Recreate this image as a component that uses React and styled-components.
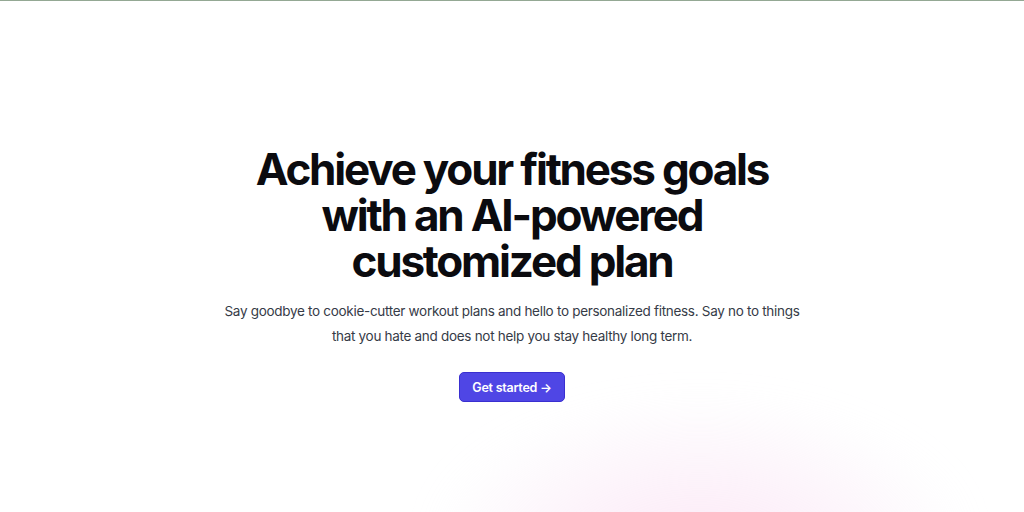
import React from "react";
import styled, { createGlobalStyle } from "styled-components";

const Global = createGlobalStyle`
  html, body { margin: 0; padding: 0; background: #fff; }
  body { font-family: Inter, "Noto Sans", sans-serif; -webkit-font-smoothing: antialiased; }
`;

const Page = styled.div`
  position: relative;
  width: 1024px;
  height: 512px;
  overflow: hidden;
  border-top: 1px solid #94a894;
  box-sizing: border-box;
  background: #fff;
`;

const Glow = styled.div`
  position: absolute;
  left: 440px;
  top: 405px;
  width: 520px;
  height: 260px;
  border-radius: 50%;
  background: radial-gradient(ellipse at 50% 70%, rgba(248, 196, 232, 0.45) 0%, rgba(246, 210, 238, 0.25) 45%, rgba(240, 232, 246, 0.08) 72%, rgba(255, 255, 255, 0) 100%);
  filter: blur(18px);
  pointer-events: none;
`;

const Hero = styled.section`
  position: relative;
  display: flex;
  flex-direction: column;
  align-items: center;
  padding-top: 145px;
  text-align: center;
`;

const Title = styled.h1`
  margin: 0;
  max-width: 560px;
  font-size: 44px;
  line-height: 46px;
  font-weight: 700;
  letter-spacing: -0.05em;
  color: #0b0b0f;
`;

const Lead = styled.p`
  margin: 15px 0 0;
  max-width: 580px;
  font-size: 13.5px;
  line-height: 25px;
  letter-spacing: -0.3px;
  color: #363b47;
`;

const Button = styled.a`
  margin-top: 23px;
  display: inline-flex;
  align-items: center;
  gap: 4px;
  height: 30px;
  padding: 0 12px;
  box-sizing: border-box;
  border-radius: 5px;
  background: #4f46e5;
  border: 1px solid #3a2fd0;
  color: #fff;
  font-size: 12.5px;
  font-weight: 600;
  letter-spacing: -0.02em;
  text-decoration: none;
`;

export default function App() {
  return (
    <>
      <Global />
      <Page>
        <Glow />
        <Hero>
          <Title>Achieve your fitness goals with an AI-powered customized plan</Title>
          <Lead>
            Say goodbye to cookie-cutter workout plans and hello to personalized fitness. Say no to things that you hate and does not help you stay healthy long term.
          </Lead>
          <Button href="#">Get started →</Button>
        </Hero>
      </Page>
    </>
  );
}
